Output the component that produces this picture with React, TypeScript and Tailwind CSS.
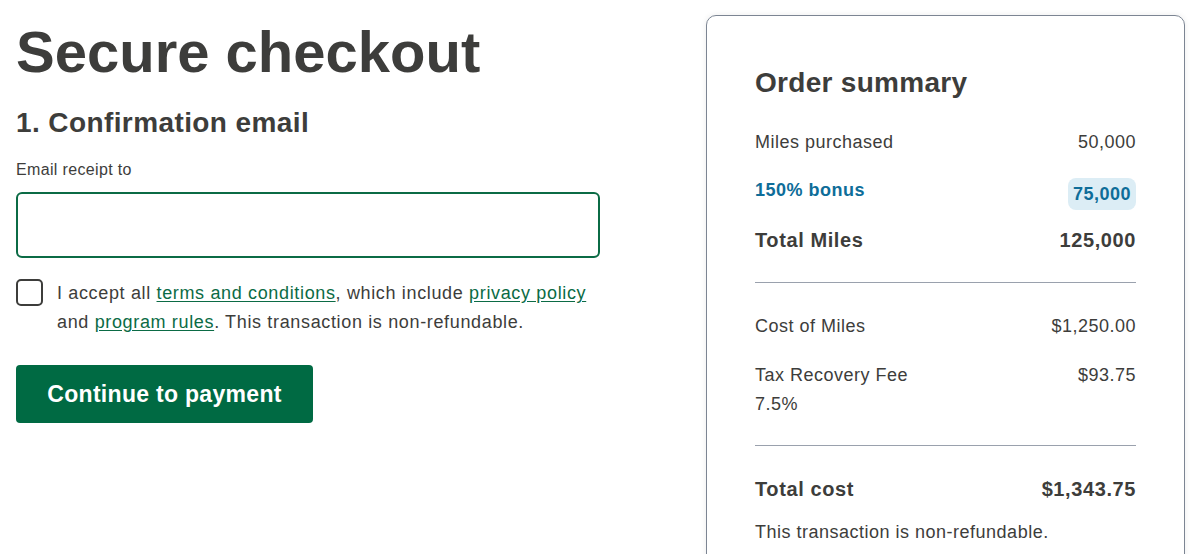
const font = { fontFamily: '"Liberation Sans", Arial, sans-serif' };

function Row({
  label,
  value,
  className = "",
}: {
  label: React.ReactNode;
  value: React.ReactNode;
  className?: string;
}) {
  return (
    <div className={`flex items-start justify-between ${className}`}>
      <div>{label}</div>
      <div>{value}</div>
    </div>
  );
}

export default function App() {
  return (
    <div
      className="flex h-[554px] w-[1200px] overflow-hidden bg-white text-[#3d3d3b]"
      style={font}
    >
      <main className="w-[600px] shrink-0 pl-4 pt-[18px]">
        <h1 className="text-[58px] font-bold leading-[68px]">Secure checkout</h1>
        <h2 className="mt-[20px] text-[28px] font-bold leading-[34px] tracking-[0.4px]">
          1. Confirmation email
        </h2>
        <label className="mt-[20px] block text-[16px] leading-[20px] tracking-[0.35px]">
          Email receipt to
        </label>
        <input
          type="email"
          className="mt-[12px] block h-[66px] w-[584px] rounded-[6px] border-2 border-[#0b6b45] px-4 text-[18px] outline-none"
        />
        <div className="mt-[21px] flex items-start gap-[14px]">
          <div className="h-[27px] w-[27px] shrink-0 rounded-[5px] border-2 border-[#3d3d3b]" />
          <p className="mt-[0px] text-[18px] leading-[29px] tracking-[0.65px]">
            I accept all{" "}
            <a href="#" className="text-[#0b6b45] underline underline-offset-2">
              terms and conditions
            </a>
            , which include{" "}
            <a href="#" className="text-[#0b6b45] underline underline-offset-2">
              privacy policy
            </a>{" "}
            and{" "}
            <a href="#" className="text-[#0b6b45] underline underline-offset-2">
              program rules
            </a>
            . This transaction is non-refundable.
          </p>
        </div>
        <button className="mt-[28px] h-[58px] w-[297px] rounded-[4px] bg-[#006a43] text-[23px] font-bold tracking-[0.3px] text-white">
          Continue to payment
        </button>
      </main>
      <aside className="ml-[106px] mt-[15px] h-[600px] w-[479px] shrink-0 rounded-[10px] border border-[#7c8593] px-[48px] pt-[50px] shadow-[0_0_6px_rgba(0,0,0,0.08)]">
        <h2 className="text-[28px] font-bold leading-[34px] tracking-[0.3px]">
          Order summary
        </h2>
        <div className="mt-[30px] text-[18px] leading-[24px] tracking-[0.5px]">
          <Row label="Miles purchased" value="50,000" />
          <Row
            className="mt-[24px] items-center font-bold text-[#0e6d99]"
            label="150% bonus"
            value={
              <span className="block rounded-[8px] bg-[#dcedf5] px-[5px] py-[4px] leading-[24px]">
                75,000
              </span>
            }
          />
          <Row
            className="mt-[18px] text-[20px] font-bold tracking-[0.6px]"
            label="Total Miles"
            value="125,000"
          />
          <div className="mt-[30px] border-t border-[#9aa1ad]" />
          <Row className="mt-[31px]" label="Cost of Miles" value="$1,250.00" />
          <Row
            className="mt-[23px] leading-[29px]"
            label={
              <>
                Tax Recovery Fee
                <br />
                7.5%
              </>
            }
            value="$93.75"
          />
          <div className="mt-[26px] border-t border-[#9aa1ad]" />
          <Row
            className="mt-[31px] text-[20px] font-bold tracking-[0.6px]"
            label="Total cost"
            value="$1,343.75"
          />
          <p className="mt-[19px]">This transaction is non-refundable.</p>
        </div>
      </aside>
    </div>
  );
}
